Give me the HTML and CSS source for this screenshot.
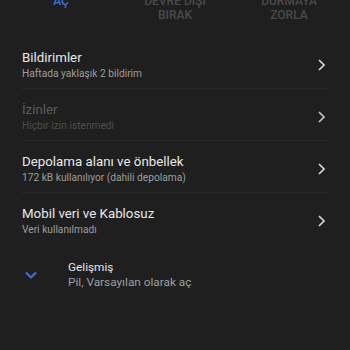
FILE: index.html
```html
<!DOCTYPE html>
<html lang="tr">
<head>
<meta charset="utf-8">
<link rel="stylesheet" href="styles.css">
</head>
<body>
<div class="actions">
  <div class="action primary">AÇ</div>
  <div class="action">DEVRE DIŞI<br>BIRAK</div>
  <div class="action">DURMAYA<br>ZORLA</div>
</div>
<div class="list">
  <div class="row">
    <div class="text">
      <div class="title">Bildirimler</div>
      <div class="sub">Haftada yaklaşık 2 bildirim</div>
    </div>
    <svg class="chev" viewBox="0 0 10 14" width="10" height="14"><path d="M2 2 L7 7 L2 12" fill="none" stroke="currentColor" stroke-width="1.7"/></svg>
  </div>
  <div class="row disabled">
    <div class="text">
      <div class="title">İzinler</div>
      <div class="sub">Hiçbir izin istenmedi</div>
    </div>
    <svg class="chev" viewBox="0 0 10 14" width="10" height="14"><path d="M2 2 L7 7 L2 12" fill="none" stroke="currentColor" stroke-width="1.7"/></svg>
  </div>
  <div class="row">
    <div class="text">
      <div class="title">Depolama alanı ve önbellek</div>
      <div class="sub">172 kB kullanılıyor (dahili depolama)</div>
    </div>
    <svg class="chev" viewBox="0 0 10 14" width="10" height="14"><path d="M2 2 L7 7 L2 12" fill="none" stroke="currentColor" stroke-width="1.7"/></svg>
  </div>
  <div class="row last">
    <div class="text">
      <div class="title">Mobil veri ve Kablosuz</div>
      <div class="sub">Veri kullanılmadı</div>
    </div>
    <svg class="chev" viewBox="0 0 10 14" width="10" height="14"><path d="M2 2 L7 7 L2 12" fill="none" stroke="currentColor" stroke-width="1.7"/></svg>
  </div>
  <div class="advanced">
    <svg class="expand" viewBox="0 0 14 10" width="14" height="10"><path d="M2 2.5 L7 7.5 L12 2.5" fill="none" stroke="currentColor" stroke-width="2.2"/></svg>
    <div class="text">
      <div class="adv-title">Gelişmiş</div>
      <div class="adv-sub">Pil, Varsayılan olarak aç</div>
    </div>
  </div>
</div>
</body>
</html>
```
FILE: styles.css
```css
html, body {
  margin: 0;
  padding: 0;
  background: #1f1f1f;
  height: 100%;
  overflow: hidden;
}
body {
  font-family: Roboto, "Noto Sans", sans-serif;
  color: #e6e6e6;
}
.actions {
  display: grid;
  grid-template-columns: repeat(3, 1fr);
  padding: 0 4px;
  margin-top: -5px;
}
.action {
  text-align: center;
  font-size: 12px;
  font-weight: 500;
  line-height: 13.5px;
  color: #4a4a4a;
}
.action.primary {
  color: #3f6fd6;
}
.list {
  padding-top: 15px;
}
.row {
  display: flex;
  align-items: center;
  margin: 0 22px;
  padding: 12px 0 7px;
  border-bottom: 1px solid #282828;
}
.row.last {
  border-bottom: none;
}
.text {
  flex: 1;
}
.title {
  font-size: 13.3px;
  line-height: 17px;
  color: #e8e8e8;
}
.sub {
  font-size: 10.2px;
  line-height: 15px;
  color: #9e9e9e;
}
.row.disabled .title {
  color: #5c5c5c;
}
.row.disabled .sub {
  color: #4e4e4e;
}
.chev {
  color: #d6d6d6;
  margin-right: 1px;
}
.row.disabled .chev {
  color: #c4c4c4;
}
.advanced {
  display: flex;
  align-items: center;
  padding: 16px 0 0 24px;
}
.expand {
  color: #3f6fd6;
  margin-right: 30px;
}
.adv-title {
  font-size: 11.8px;
  line-height: 15px;
  color: #e6e6e6;
}
.adv-sub {
  font-size: 11.8px;
  line-height: 15px;
  color: #9e9e9e;
}
```
